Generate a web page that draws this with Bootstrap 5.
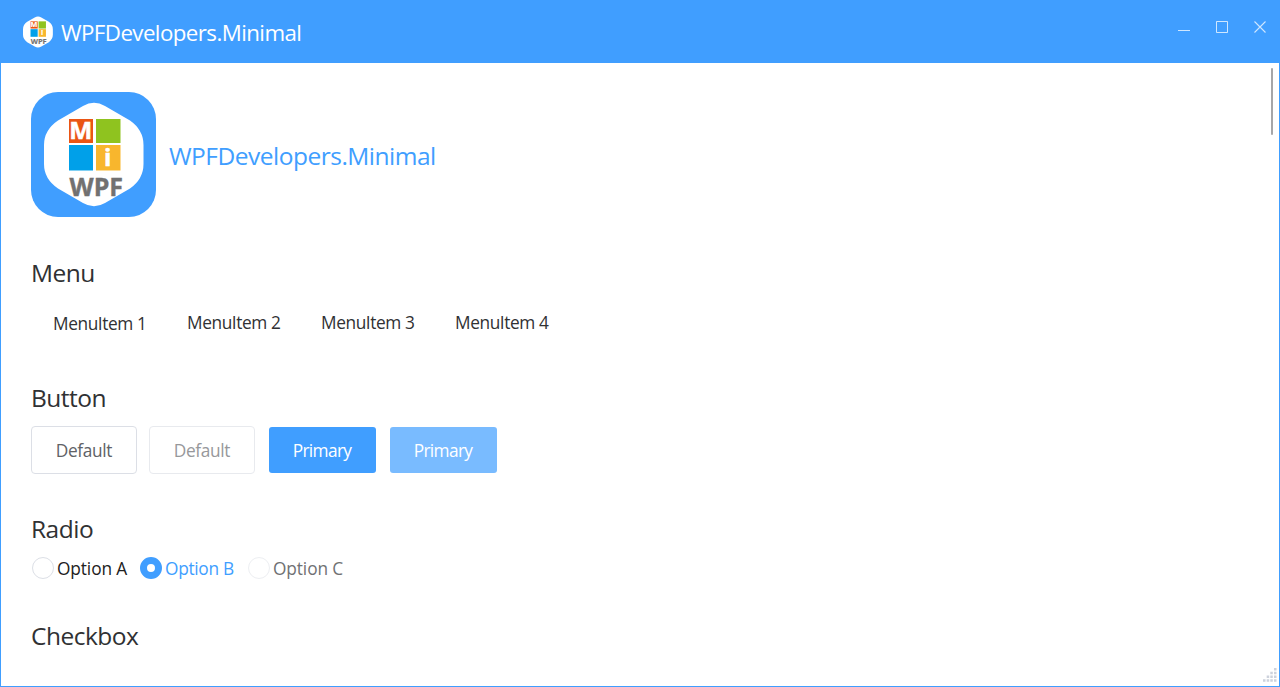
<!DOCTYPE html>
<html lang="en">
<head>
<meta charset="utf-8">
<meta name="viewport" content="width=device-width, initial-scale=1">
<title>WPFDevelopers.Minimal</title>
<link href="https://cdn.jsdelivr.net/npm/bootstrap@5.3.0/dist/css/bootstrap.min.css" rel="stylesheet">
<style>
:root { --accent: #409eff; }
body { font-family: "Open Sans", "Noto Sans", sans-serif; color: #303133; background: #fff; }
.window { height: 687px; border: 1px solid var(--accent); }
.titlebar { height: 62px; background: var(--accent); padding-left: 22px; }
.app-title { font-size: 22.3px; line-height: 30px; letter-spacing: -.57px; margin: 2px 0 0 8px; }
.caption-buttons { gap: 26px; margin: -11px 13px 0 0; }
.content-area { padding: 29px 30px 0; }
.brand-name { font-size: 24.5px; line-height: 34px; letter-spacing: -.5px; color: var(--accent); margin: 3px 0 0 13px; }
.menu-demo, .checkbox-demo { margin-top: 39px; }
.button-demo { margin-top: 35px; }
.radio-demo { margin-top: 38px; }
.section-title { font-size: 24.5px; line-height: 34px; font-weight: 400; letter-spacing: -.5px; margin: 0; }
.menu-row { height: 48px; margin-top: 8px; }
.menu-row .nav-link { width: 134px; padding: 1px 0 0 22px; line-height: 48px; font-size: 17.3px; letter-spacing: -.4px; color: #303133; }
.menu-row .nav-item:first-child .nav-link { padding-top: 2px; }
.button-row { height: 48px; margin-top: 11px; }
.button-row .btn { --bs-btn-border-radius: 4px; width: 107px; height: 46px; padding: 2px 0 0; font-size: 17.3px; line-height: 44px; letter-spacing: -.35px; }
.button-row .btn + .btn { margin-left: 14px; }
.button-row .btn-plain { width: 106px; height: 48px; line-height: 44px; border: 1px solid #dcdfe6; color: #606266; background: #fff; }
.button-row .btn-plain + .btn-plain { margin-left: 12px; }
.btn-plain:disabled { opacity: .65; }
.button-row .btn-accent { background: var(--accent); border: 0; color: #fff; border-radius: 3px; letter-spacing: -.65px; padding-right: 1px; }
.button-row .btn-accent:disabled { background: #79bbff; opacity: 1; }
.radio-row { height: 24px; margin-top: 10px; }
.radio-row .form-check { width: 108px; min-height: 0; margin: 0; padding: 0; }
.radio-row .form-check-input { width: 22px; height: 22px; margin: 0 3px 0 1px; float: none; border: 1px solid #dcdfe6; flex: none; }
.radio-row .form-check-input:checked { border: 7px solid var(--accent); background: #fff; }
.radio-row .form-check-label { font-size: 17.3px; line-height: 24px; letter-spacing: -.1px; padding-top: 2px; white-space: nowrap; color: #212121; }
.radio-row .form-check-input:checked + .form-check-label { color: var(--accent); letter-spacing: -.3px; }
.radio-row .form-check-input:disabled + .form-check-label { color: #707173; opacity: 1; }
.scroll-thumb { width: 2px; height: 67px; top: 67px; right: 6px; background: #a6a6a8; border-radius: 1px; }
.size-grip { right: 2px; bottom: 4px; }
</style>
</head>
<body>
<svg class="d-none">
  <symbol id="emblem" viewBox="13 10 100 105">
    <path fill="#fff" d="M52 14Q63 7.500 74 14L99 28.500Q112.500 38 112.500 53V72Q112.500 87 99 96.500L74 111Q63 117.500 52 111L27 96.500Q13 87 13 72V53Q13 38 27 28.500Z"/>
    <path fill="#ea5514" d="M38 27h24v24H38z"/>
    <path fill="#8fc31f" d="M65 27h24.500v24H65z"/>
    <path fill="#00a0e9" d="M38 53h24v25.500H38z"/>
    <path fill="#f8b62d" d="M65 53h24.500v25.500H65z"/>
    <g font-family="Open Sans, sans-serif" font-weight="700">
      <text x="38.200" y="47" font-size="23" textLength="23" lengthAdjust="spacingAndGlyphs" fill="#fff" stroke="#fff" stroke-width=".5">M</text>
      <text x="73" y="74" font-size="24" fill="#fff" stroke="#fff" stroke-width=".5">i</text>
      <text x="38.500" y="103.500" font-size="25" textLength="53.500" lengthAdjust="spacingAndGlyphs" fill="#727171" stroke="#727171" stroke-width=".4">WPF</text>
    </g>
  </symbol>
</svg>
<div class="window position-relative overflow-hidden">
  <header class="titlebar d-flex align-items-center text-white">
    <svg width="30" height="32"><use href="#emblem"/></svg>
    <span class="app-title">WPFDevelopers.Minimal</span>
    <div class="caption-buttons d-flex ms-auto">
      <svg width="12" height="12"><path d="M0 9.500h12" stroke="#fff" stroke-opacity=".75"/></svg>
      <svg width="12" height="12"><path d="M.5.5h11v11H.5z" fill="none" stroke="#fff" stroke-opacity=".75"/></svg>
      <svg width="12" height="12"><path d="M.5.5l11 11M11.500.5l-11 11" stroke="#fff" stroke-opacity=".75" stroke-width="1.100"/></svg>
    </div>
  </header>
  <main class="content-area">
    <section class="d-flex align-items-center">
      <svg width="125" height="125" viewBox="0 0 125 125"><rect width="125" height="125" rx="27" fill="#409eff"/><use href="#emblem" x="13" y="10" width="100" height="105"/></svg>
      <span class="brand-name">WPFDevelopers.Minimal</span>
    </section>
    <section class="menu-demo">
      <h2 class="section-title">Menu</h2>
      <ul class="menu-row nav">
        <li class="nav-item"><a class="nav-link" href="#">MenuItem 1</a></li>
        <li class="nav-item"><a class="nav-link" href="#">MenuItem 2</a></li>
        <li class="nav-item"><a class="nav-link" href="#">MenuItem 3</a></li>
        <li class="nav-item"><a class="nav-link" href="#">MenuItem 4</a></li>
      </ul>
    </section>
    <section class="button-demo">
      <h2 class="section-title">Button</h2>
      <div class="button-row d-flex align-items-center">
        <button class="btn btn-plain">Default</button>
        <button class="btn btn-plain" disabled>Default</button>
        <button class="btn btn-accent">Primary</button>
        <button class="btn btn-accent" disabled>Primary</button>
      </div>
    </section>
    <section class="radio-demo">
      <h2 class="section-title">Radio</h2>
      <div class="radio-row d-flex">
        <div class="form-check d-flex align-items-center"><input class="form-check-input" type="radio" name="option" id="optA"><label class="form-check-label" for="optA">Option A</label></div>
        <div class="form-check d-flex align-items-center"><input class="form-check-input" type="radio" name="option" id="optB" checked><label class="form-check-label" for="optB">Option B</label></div>
        <div class="form-check d-flex align-items-center"><input class="form-check-input" type="radio" name="option" id="optC" disabled><label class="form-check-label" for="optC">Option C</label></div>
      </div>
    </section>
    <section class="checkbox-demo">
      <h2 class="section-title">Checkbox</h2>
    </section>
  </main>
  <div class="scroll-thumb position-absolute"></div>
  <svg class="size-grip position-absolute" width="14" height="14" fill="#cdd2dc"><path d="M11 0h2.500v2.500H11zM7.300 3.800h2.500v2.500H7.300zM11 3.800h2.500v2.500H11zM3.700 7.500h2.500V10H3.700zM7.300 7.500h2.500V10H7.300zM11 7.500h2.500V10H11zM0 11.200h2.500v2.500H0zM3.700 11.200h2.500v2.500H3.700zM7.300 11.200h2.500v2.500H7.300zM11 11.200h2.500v2.500H11z"/></svg>
</div>
<script src="https://cdn.jsdelivr.net/npm/bootstrap@5.3.0/dist/js/bootstrap.bundle.min.js"></script>
</body>
</html>
